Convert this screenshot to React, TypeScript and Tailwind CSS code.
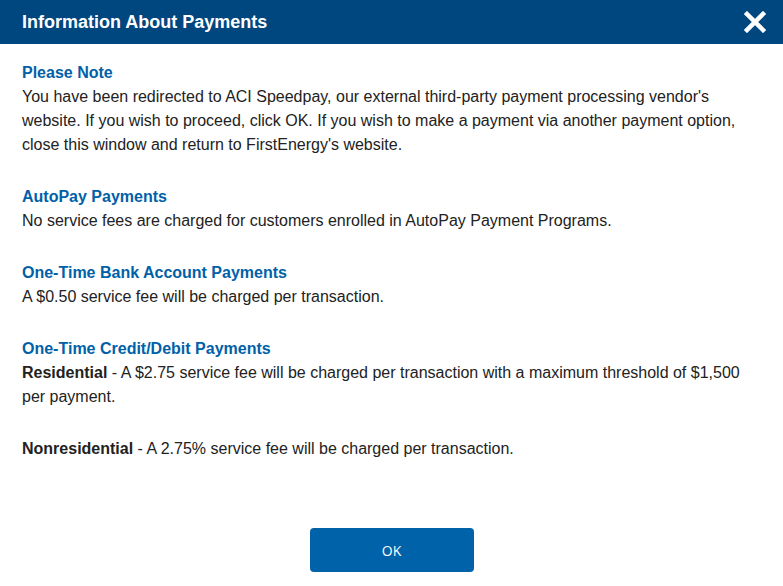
import React from "react";

export default function App() {
  const font = { fontFamily: '"Liberation Sans", Arial, sans-serif' };
  return (
    <div className="w-[783px] h-[586px] bg-white flex flex-col overflow-hidden" style={font}>
      <div className="h-[44px] bg-[#00467f] flex items-center justify-between pl-[22px] pr-[17px] shrink-0">
        <h1 className="text-white font-bold text-[18px]">Information About Payments</h1>
        <svg width="22" height="22" viewBox="0 0 22 22" aria-label="close">
          <path d="M3 3 L19 19 M19 3 L3 19" stroke="white" strokeWidth="4.5" strokeLinecap="square" />
        </svg>
      </div>
      <div className="px-[22px] pt-[17px] text-[16px] leading-[24px] text-[#222] flex flex-col gap-[28px]">
        <section>
          <h2 className="font-bold text-[#0061a8]">Please Note</h2>
          <p>
            You have been redirected to ACI Speedpay, our external third-party payment processing vendor's website. If you wish to proceed, click OK. If you wish to make a payment via another payment option, close this window and return to FirstEnergy's website.
          </p>
        </section>
        <section>
          <h2 className="font-bold text-[#0061a8]">AutoPay Payments</h2>
          <p>No service fees are charged for customers enrolled in AutoPay Payment Programs.</p>
        </section>
        <section>
          <h2 className="font-bold text-[#0061a8]">One-Time Bank Account Payments</h2>
          <p>A $0.50 service fee will be charged per transaction.</p>
        </section>
        <section>
          <h2 className="font-bold text-[#0061a8]">One-Time Credit/Debit Payments</h2>
          <p className="pr-[20px]">
            <b>Residential</b> - A $2.75 service fee will be charged per transaction with a maximum threshold of $1,500 per payment.
          </p>
        </section>
        <section>
          <p>
            <b>Nonresidential</b> - A 2.75% service fee will be charged per transaction.
          </p>
        </section>
      </div>
      <div className="flex justify-center mt-[67px]">
        <button
          className="w-[164px] h-[44px] bg-[#0062a8] rounded-[4px] text-white text-[14px]"
          style={{ fontFamily: '"Open Sans", sans-serif' }}
        >
          OK
        </button>
      </div>
    </div>
  );
}
